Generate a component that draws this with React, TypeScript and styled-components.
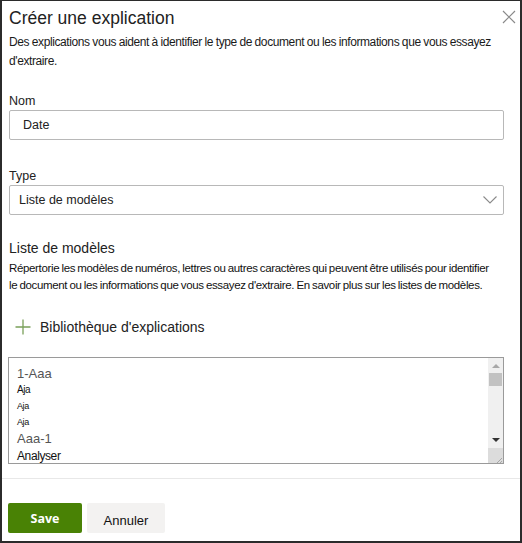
import styled, { createGlobalStyle } from "styled-components";

const GlobalStyle = createGlobalStyle`
  html, body {
    margin: 0;
    padding: 0;
    background: #ffffff;
  }
  * {
    box-sizing: border-box;
  }
`;

const Panel = styled.div`
  width: 522px;
  height: 543px;
  border: 2px solid #2b2b2b;
  border-top-width: 1px;
  background: #ffffff;
  font-family: "Liberation Sans", Arial, sans-serif;
  color: #222;
  display: flex;
  flex-direction: column;
`;

const Body = styled.div`
  padding: 6px 16px 0 7px;
  display: flex;
  flex-direction: column;
  flex: 1;
`;

const Header = styled.div`
  display: flex;
  justify-content: space-between;
  align-items: flex-start;
`;

const Title = styled.h1`
  margin: 0;
  font-size: 17.5px;
  font-weight: normal;
  color: #222;
  line-height: 22px;
`;

const CloseButton = styled.button`
  border: none;
  background: none;
  padding: 0;
  margin: 3px -12px 0 0;
  width: 14px;
  height: 14px;
  display: flex;
`;

const Intro = styled.p`
  margin: 4px 0 0;
  font-size: 12px;
  line-height: 19px;
  color: #1a1a1a;
  letter-spacing: -0.4px;
  word-spacing: -0.3px;
`;

const Field = styled.div<{ $top: number }>`
  display: flex;
  flex-direction: column;
  margin-top: ${(p) => p.$top}px;
`;

const Label = styled.label`
  font-size: 12.5px;
  color: #222;
  line-height: 16px;
  margin-bottom: 1px;
`;

const TextInput = styled.div`
  height: 30px;
  border: 1px solid #b8b8b8;
  border-radius: 2px;
  display: flex;
  align-items: center;
  padding-left: 13px;
  font-size: 12.5px;
  color: #222;
`;

const Select = styled.div`
  height: 30px;
  border: 1px solid #b8b8b8;
  border-radius: 2px;
  display: flex;
  align-items: center;
  justify-content: space-between;
  padding: 0 5px 0 9px;
  font-size: 12.5px;
  color: #222;
`;

const SectionTitle = styled.h2`
  margin: 24px 0 0;
  font-size: 14px;
  font-weight: normal;
  color: #222;
  line-height: 18px;
`;

const Help = styled.p`
  margin: 3px 0 0;
  max-width: 482px;
  font-size: 11.5px;
  line-height: 17px;
  letter-spacing: -0.35px;
  word-spacing: -0.6px;
  color: #111;
`;

const AddLink = styled.button`
  margin: 25px 0 0 6px;
  padding: 0;
  border: none;
  background: none;
  display: flex;
  align-items: center;
  gap: 9px;
  font-family: inherit;
  font-size: 14px;
  color: #222;
  cursor: pointer;
  align-self: flex-start;
`;

const ListBox = styled.div`
  margin: 22px 0 0 -1px;
  height: 107px;
  border: 1px solid #9a9a9a;
  display: grid;
  grid-template-columns: 1fr 15px;
  overflow: hidden;
`;

const Items = styled.div`
  padding: 7px 0 0 8px;
  display: flex;
  flex-direction: column;
`;

const Item = styled.div<{ $size: number; $height: number; $muted?: boolean }>`
  font-size: ${(p) => p.$size}px;
  height: ${(p) => p.$height}px;
  line-height: ${(p) => p.$height}px;
  color: ${(p) => (p.$muted ? "#555" : "#111")};
  letter-spacing: ${(p) => (p.$muted ? "0" : "-0.4px")};
`;

const ScrollTrack = styled.div`
  background: #f0f0f0;
  display: flex;
  flex-direction: column;
  align-items: center;
`;

const Arrow = styled.div`
  height: 15px;
  width: 15px;
  display: flex;
  align-items: center;
  justify-content: center;
`;

const Thumb = styled.div`
  width: 13px;
  height: 13px;
  background: #c2c2c2;
`;

const Spacer = styled.div`
  flex: 1;
`;

const Grip = styled.div`
  width: 15px;
  height: 17px;
  background: #dcdcdc;
  display: flex;
  align-items: flex-end;
  justify-content: flex-end;
`;

const Footer = styled.div`
  border-top: 1px solid #e8e8e8;
  padding: 24px 0 8px 6px;
  display: flex;
  gap: 5px;
`;

const Button = styled.button<{ $primary?: boolean }>`
  height: 30px;
  width: ${(p) => (p.$primary ? 74 : 78)}px;
  border: none;
  border-radius: 2px;
  font-family: ${(p) => (p.$primary ? '"Open Sans", "Liberation Sans", sans-serif' : "inherit")};
  font-size: ${(p) => (p.$primary ? 12.5 : 13)}px;
  font-weight: ${(p) => (p.$primary ? 700 : 400)};
  background: ${(p) => (p.$primary ? "#498205" : "#f3f2f1")};
  color: ${(p) => (p.$primary ? "#ffffff" : "#111")};
  padding: ${(p) => (p.$primary ? "0" : "4px 0 0")};
`;

const App = () => {
  return (
    <>
      <GlobalStyle />
      <Panel>
        <Body>
          <Header>
            <Title>Créer une explication</Title>
            <CloseButton aria-label="Fermer">
              <svg width="14" height="14" viewBox="0 0 14 14">
                <path d="M1 1 L13 13 M13 1 L1 13" stroke="#8a8a8a" strokeWidth="1.2" />
              </svg>
            </CloseButton>
          </Header>
          <Intro>
            Des explications vous aident à identifier le type de document ou les informations que vous essayez
            d'extraire.
          </Intro>

          <Field $top={22}>
            <Label>Nom</Label>
            <TextInput>Date</TextInput>
          </Field>

          <Field $top={28}>
            <Label>Type</Label>
            <Select>
              Liste de modèles
              <svg width="16" height="10" viewBox="0 0 16 10">
                <path d="M1.5 1.5 L8 8 L14.5 1.5" fill="none" stroke="#8a8a8a" strokeWidth="1.1" />
              </svg>
            </Select>
          </Field>

          <SectionTitle>Liste de modèles</SectionTitle>
          <Help>
            Répertorie les modèles de numéros, lettres ou autres caractères qui peuvent être utilisés pour identifier
            le document ou les informations que vous essayez d'extraire. En savoir plus sur les listes de modèles.
          </Help>

          <AddLink>
            <svg width="16" height="16" viewBox="0 0 16 16">
              <path d="M8 0.5 V15.5 M0.5 8 H15.5" stroke="#7aa05a" strokeWidth="1.3" />
            </svg>
            Bibliothèque d'explications
          </AddLink>

          <ListBox>
            <Items>
              <Item $size={13} $height={17} $muted>
                1-Aaa
              </Item>
              <Item $size={10} $height={16}>
                Aja
              </Item>
              <Item $size={9} $height={16}>
                Aja
              </Item>
              <Item $size={9} $height={16}>
                Aja
              </Item>
              <Item $size={13} $height={18} $muted>
                Aaa-1
              </Item>
              <Item $size={12} $height={17}>
                Analyser
              </Item>
            </Items>
            <ScrollTrack>
              <Arrow>
                <svg width="8" height="5" viewBox="0 0 8 5">
                  <path d="M0 5 L4 1 L8 5 Z" fill="#a8a8a8" />
                </svg>
              </Arrow>
              <Thumb />
              <Spacer />
              <Arrow>
                <svg width="8" height="5" viewBox="0 0 8 5">
                  <path d="M0 0 L8 0 L4 4 Z" fill="#333" />
                </svg>
              </Arrow>
              <Grip>
                <svg width="10" height="10" viewBox="0 0 10 10">
                  <path d="M9 3 L3 9 M9 6 L6 9" stroke="#999" strokeWidth="0.8" />
                </svg>
              </Grip>
            </ScrollTrack>
          </ListBox>
        </Body>
        <Footer>
          <Button $primary>Save</Button>
          <Button>Annuler</Button>
        </Footer>
      </Panel>
    </>
  );
};

export default App;
